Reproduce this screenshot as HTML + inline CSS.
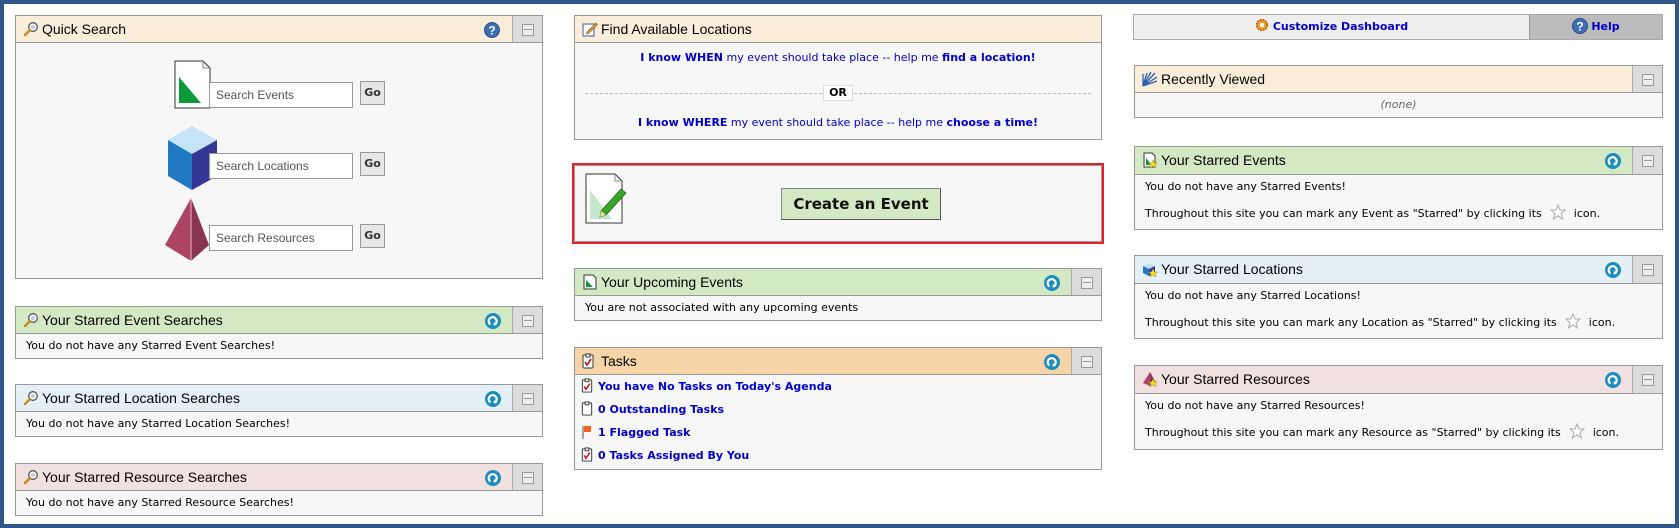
<!DOCTYPE html>
<html><head><meta charset="utf-8"><style>
*{box-sizing:border-box;margin:0;padding:0}
body{width:1679px;height:528px;background:#2f5787;position:relative;overflow:hidden;font-family:"DejaVu Sans",Verdana,sans-serif;font-size:11px;color:#000}
#page{position:absolute;left:4px;top:4px;width:1671px;height:520px;background:#fff}
.p{position:absolute;border:1px solid #999;background:#f7f7f7}
.h{position:absolute;left:0;top:0;right:0;border-bottom:1px solid #999;font-family:"Liberation Sans",Arial,sans-serif;font-size:14px;line-height:26px;padding-left:26px}
.h .ic{position:absolute;left:7px;top:5px;width:16px;height:16px}
.col{position:absolute;right:0;top:0;bottom:0;width:30px;background:#dcdcdc;border-left:1px solid #aaa}
.col:after{content:"";position:absolute;left:9px;top:8px;width:10px;height:10px;border:1px solid #999;background:#eee}
.col:before{content:"";position:absolute;left:11px;top:13px;width:8px;height:1px;background:#999;z-index:1}
.rf{position:absolute;right:41px;top:6px;width:16px;height:16px}
.b{position:absolute;left:0;right:0;bottom:0;padding:6px 10px}
.cream{background:#faeedb}.green{background:#d3e9c3}.blue{background:#e4eff6}.pink{background:#f0e0e0}.orange{background:#f5d5a7}
a,.lk{color:#0000cc;text-decoration:none}
.inp{position:absolute;width:144px;height:26px;border:1px solid #999;background:#fff;font-family:"Liberation Sans",Arial,sans-serif;font-size:12px;color:#555;padding:6px 6px;line-height:13px}
.go{position:absolute;width:25px;height:24px;border:1px solid #999;background:#e6e6e6;font-weight:bold;font-size:11px;text-align:center;line-height:22px;color:#333}
.star{display:inline-block;vertical-align:-3px;margin:0 8px}
.sb{position:absolute;left:10px;top:26px;line-height:27px}
</style></head><body><div id="page"></div>

<svg width="0" height="0" style="position:absolute"><defs>
<symbol id="mag" viewBox="0 0 16 16"><circle cx="10" cy="6" r="4.3" fill="#fff" stroke="#555" stroke-width="1.3"/><circle cx="10" cy="6" r="2" fill="#bcd"/><path d="M7 9 L2 14" stroke="#c88a1a" stroke-width="2.4" stroke-linecap="round"/></symbol>
<symbol id="ref" viewBox="0 0 16 16"><circle cx="8" cy="8" r="8" fill="#1a8cbf"/><path d="M5.5 11.5 A4 4 0 1 1 10.5 11" fill="none" stroke="#fff" stroke-width="2.2"/><path d="M9 9 L12 12 L8.5 12.5 Z" fill="#fff"/></symbol>
<symbol id="help" viewBox="0 0 16 16"><circle cx="8" cy="8" r="7.5" fill="#3d6db5" stroke="#2a4f8a"/><text x="8" y="12.5" font-family="Liberation Sans,Arial" font-weight="bold" font-size="12" fill="#fff" text-anchor="middle">?</text></symbol>
<symbol id="st" viewBox="0 0 16 16"><path d="M8 1 L10 6 L15 6 L11 9.5 L12.5 15 L8 11.8 L3.5 15 L5 9.5 L1 6 L6 6 Z" fill="#fff" stroke="#aaa"/></symbol>
<symbol id="clip" viewBox="0 0 12 16"><rect x="1" y="2" width="10" height="13" rx="1" fill="#fff" stroke="#333"/><rect x="4" y="1" width="4" height="3" fill="#fff" stroke="#333"/><path d="M3 9 L5 12 L9 6" stroke="#b00" stroke-width="1.5" fill="none"/></symbol>
</defs></svg>

<!-- LEFT COLUMN -->
<div class="p" style="left:15px;top:15px;width:528px;height:264px">
 <div class="h cream" style="height:27px"><svg class="ic"><use href="#mag"/></svg>Quick Search<svg class="rf" style="right:42px"><use href="#help"/></svg><div class="col"></div></div>
 <svg style="position:absolute;left:158px;top:44px" width="38" height="50"><path d="M1 1 H29 L36 8 V48 H1 Z" fill="#fff" stroke="#333"/><path d="M29 1 V8 H36" fill="none" stroke="#888"/><path d="M5 17 L27 43 H5 Z" fill="#0a9a3a"/></svg>
 <div class="inp" style="left:193px;top:66px">Search Events</div><div class="go" style="left:344px;top:65px">Go</div>
 <svg style="position:absolute;left:151px;top:109px" width="52" height="66"><path d="M25 1 L50 15 L25 29 L1 15 Z" fill="#c5e4f7"/><path d="M1 15 L25 29 V65 L1 51 Z" fill="#1f78c1"/><path d="M50 15 V51 L25 65 V29 Z" fill="#353797"/></svg>
 <div class="inp" style="left:193px;top:137px">Search Locations</div><div class="go" style="left:344px;top:136px">Go</div>
 <svg style="position:absolute;left:148px;top:181px" width="46" height="66"><path d="M27 1 L1 48 L27 64 Z" fill="#ac4563"/><path d="M27 1 L45 48 L27 64 Z" fill="#8a354f"/><path d="M27 1 V64" stroke="#e9b6c4"/></svg>
 <div class="inp" style="left:193px;top:209px">Search Resources</div><div class="go" style="left:344px;top:208px">Go</div>
</div>

<div class="p" style="left:15px;top:306px;width:528px;height:53px"><div class="h green" style="height:27px"><svg class="ic"><use href="#mag"/></svg>Your Starred Event Searches<svg class="rf"><use href="#ref"/></svg><div class="col"></div></div><div class="b">You do not have any Starred Event Searches!</div></div>
<div class="p" style="left:15px;top:384px;width:528px;height:53px"><div class="h blue" style="height:27px"><svg class="ic"><use href="#mag"/></svg>Your Starred Location Searches<svg class="rf"><use href="#ref"/></svg><div class="col"></div></div><div class="b">You do not have any Starred Location Searches!</div></div>
<div class="p" style="left:15px;top:463px;width:528px;height:53px"><div class="h pink" style="height:27px"><svg class="ic"><use href="#mag"/></svg>Your Starred Resource Searches<svg class="rf"><use href="#ref"/></svg><div class="col"></div></div><div class="b">You do not have any Starred Resource Searches!</div></div>

<!-- MIDDLE COLUMN -->
<div class="p" style="left:574px;top:15px;width:528px;height:125px">
 <div class="h cream" style="height:27px"><svg class="ic" viewBox="0 0 16 16"><rect x="1" y="3" width="11" height="12" fill="#fff" stroke="#3a5a9a"/><path d="M5 11 L14 2 L15.5 3.5 L6.5 12.5 L4.5 13 Z" fill="#e8a33a" stroke="#7a5010" stroke-width=".6"/></svg>Find Available Locations</div>
 <div style="position:absolute;left:0;right:0;top:35px;text-align:center;color:#0000cc"><b>I know WHEN</b> my event should take place -- help me <b>find a location!</b></div>
 <div style="position:absolute;left:10px;right:10px;top:77px;border-top:1px dashed #bbb"></div>
 <div style="position:absolute;left:248px;top:69px;width:30px;height:16px;background:#fff;border:1px solid #ddd;text-align:center;font-weight:bold;font-size:11px;line-height:14px">OR</div>
 <div style="position:absolute;left:0;right:0;top:100px;text-align:center;color:#0000cc"><b>I know WHERE</b> my event should take place -- help me <b>choose a time!</b></div>
</div>

<div style="position:absolute;left:572px;top:163px;width:532px;height:81px;border:2px solid #e3202b"><div style="position:absolute;inset:0;border:1px solid #999;background:#f7f7f7">
 <svg style="position:absolute;left:10px;top:7px" width="42" height="52"><path d="M1 1 H30 L37 8 V50 H1 Z" fill="#fff" stroke="#333"/><path d="M30 1 V8 H37" fill="none" stroke="#888"/><path d="M5 17 L27 46 H5 Z" fill="#c5e6cf"/><path d="M16 38 L36 16 L41 20 L21 42 L15 44 Z" fill="#3aa52a" stroke="#1f6b12" stroke-width=".8"/><path d="M15 44 L16 38 L21 42 Z" fill="#f0d8a0"/></svg>
 <div style="position:absolute;left:206px;top:22px;width:160px;height:32px;background:#d3e9c3;border:1px solid #888;border-right-color:#555;border-bottom-color:#555;font-weight:bold;font-size:15px;text-align:center;line-height:30px;color:#111">Create an Event</div>
</div></div>

<div class="p" style="left:574px;top:268px;width:528px;height:53px"><div class="h green" style="height:27px"><svg class="ic" viewBox="0 0 16 16"><path d="M2 1 H11 L14 4 V15 H2 Z" fill="#fff" stroke="#333"/><path d="M4 6 L11 13 H4 Z" fill="#0a9a3a"/></svg>Your Upcoming Events<svg class="rf"><use href="#ref"/></svg><div class="col"></div></div><div class="b">You are not associated with any upcoming events</div></div>

<div class="p" style="left:574px;top:347px;width:528px;height:123px"><div class="h orange" style="height:27px"><svg class="ic" viewBox="0 0 12 16" style="width:12px"><use href="#clip"/></svg>Tasks<svg class="rf"><use href="#ref"/></svg><div class="col"></div></div>
 <div style="position:absolute;left:6px;top:27px;line-height:23px;font-weight:bold;color:#0000cc">
  <div><svg width="12" height="15" style="vertical-align:-3px;margin-right:5px"><use href="#clip"/></svg>You have No Tasks on Today's Agenda</div>
  <div><svg width="12" height="15" viewBox="0 0 12 16" style="vertical-align:-3px;margin-right:5px"><rect x="1" y="2" width="10" height="13" rx="1" fill="#fff" stroke="#333"/><rect x="4" y="1" width="4" height="3" fill="#fff" stroke="#333"/></svg>0 Outstanding Tasks</div>
  <div><svg width="12" height="15" style="vertical-align:-3px;margin-right:5px"><path d="M2 2 V15" stroke="#888" stroke-width="1.5"/><path d="M3 2 H10 V8 H3 Z" fill="#f06020"/></svg>1 Flagged Task</div>
  <div><svg width="12" height="15" style="vertical-align:-3px;margin-right:5px"><use href="#clip"/></svg>0 Tasks Assigned By You</div>
 </div>
</div>

<!-- RIGHT COLUMN -->
<div style="position:absolute;left:1133px;top:14px;width:530px;height:26px;border:1px solid #aaa;background:#eee">
 <div style="position:absolute;left:0;top:0;width:395px;height:24px;text-align:center;line-height:24px;font-weight:bold;color:#0000cc"><svg width="14" height="14" viewBox="0 0 16 16" style="vertical-align:-2px;margin-right:4px"><circle cx="8" cy="8" r="6" fill="#f0a020" stroke="#b05a10" stroke-width="2" stroke-dasharray="2 1.2"/><circle cx="8" cy="8" r="2.5" fill="#fff"/></svg>Customize Dashboard</div>
 <div style="position:absolute;left:395px;top:0;right:0;height:24px;background:#bcbcbc;border-left:1px solid #999;text-align:center;line-height:24px;font-weight:bold;color:#0000cc"><svg width="16" height="16" style="vertical-align:-4px;margin-right:3px"><use href="#help"/></svg>Help</div>
</div>

<div class="p" style="left:1134px;top:65px;width:529px;height:53px"><div class="h cream" style="height:27px"><svg class="ic" viewBox="0 0 16 16"><path d="M1 15 L1 3 M1 15 L5 2 M1 15 L9 1 M1 15 L13 2 M1 15 L15 6 M1 15 L15 10" stroke="#2a5cb0" stroke-width="1.3"/></svg>Recently Viewed<div class="col"></div></div><div class="b" style="text-align:center;color:#666;font-style:italic">(none)</div></div>

<div class="p" style="left:1134px;top:146px;width:529px;height:84px"><div class="h green" style="height:28px"><svg class="ic" viewBox="0 0 16 16"><path d="M2 1 H10 L13 4 V15 H2 Z" fill="#fff" stroke="#333"/><path d="M4 6 L10 13 H4 Z" fill="#0a9a3a"/><path d="M11 8 L12.5 11 L15.5 11 L13 13 L14 16 L11 14 L8 16 L9 13 L6.5 11 L9.5 11 Z" fill="#ffe000" stroke="#886" stroke-width=".5"/></svg>Your Starred Events<svg class="rf"><use href="#ref"/></svg><div class="col"></div></div>
 <div class="sb">You do not have any Starred Events!<br>Throughout this site you can mark any Event as "Starred" by clicking its<svg class="star" width="16" height="16"><use href="#st"/></svg>icon.</div></div>

<div class="p" style="left:1134px;top:255px;width:529px;height:84px"><div class="h blue" style="height:28px"><svg class="ic" viewBox="0 0 16 16"><path d="M7 2 L13 5 L7 8 L1 5 Z" fill="#c5e4f7"/><path d="M1 5 L7 8 V15 L1 12 Z" fill="#1f78c1"/><path d="M13 5 V12 L7 15 V8 Z" fill="#353797"/><path d="M11 8 L12.5 11 L15.5 11 L13 13 L14 16 L11 14 L8 16 L9 13 L6.5 11 L9.5 11 Z" fill="#ffe000" stroke="#886" stroke-width=".5"/></svg>Your Starred Locations<svg class="rf"><use href="#ref"/></svg><div class="col"></div></div>
 <div class="sb">You do not have any Starred Locations!<br>Throughout this site you can mark any Location as "Starred" by clicking its<svg class="star" width="16" height="16"><use href="#st"/></svg>icon.</div></div>

<div class="p" style="left:1134px;top:365px;width:529px;height:85px"><div class="h pink" style="height:28px"><svg class="ic" viewBox="0 0 16 16"><path d="M8 1 L1 12 L8 15 Z" fill="#ac4563"/><path d="M8 1 L14 12 L8 15 Z" fill="#8a354f"/><path d="M11 8 L12.5 11 L15.5 11 L13 13 L14 16 L11 14 L8 16 L9 13 L6.5 11 L9.5 11 Z" fill="#ffe000" stroke="#886" stroke-width=".5"/></svg>Your Starred Resources<svg class="rf"><use href="#ref"/></svg><div class="col"></div></div>
 <div class="sb">You do not have any Starred Resources!<br>Throughout this site you can mark any Resource as "Starred" by clicking its<svg class="star" width="16" height="16"><use href="#st"/></svg>icon.</div></div>

</body></html>
